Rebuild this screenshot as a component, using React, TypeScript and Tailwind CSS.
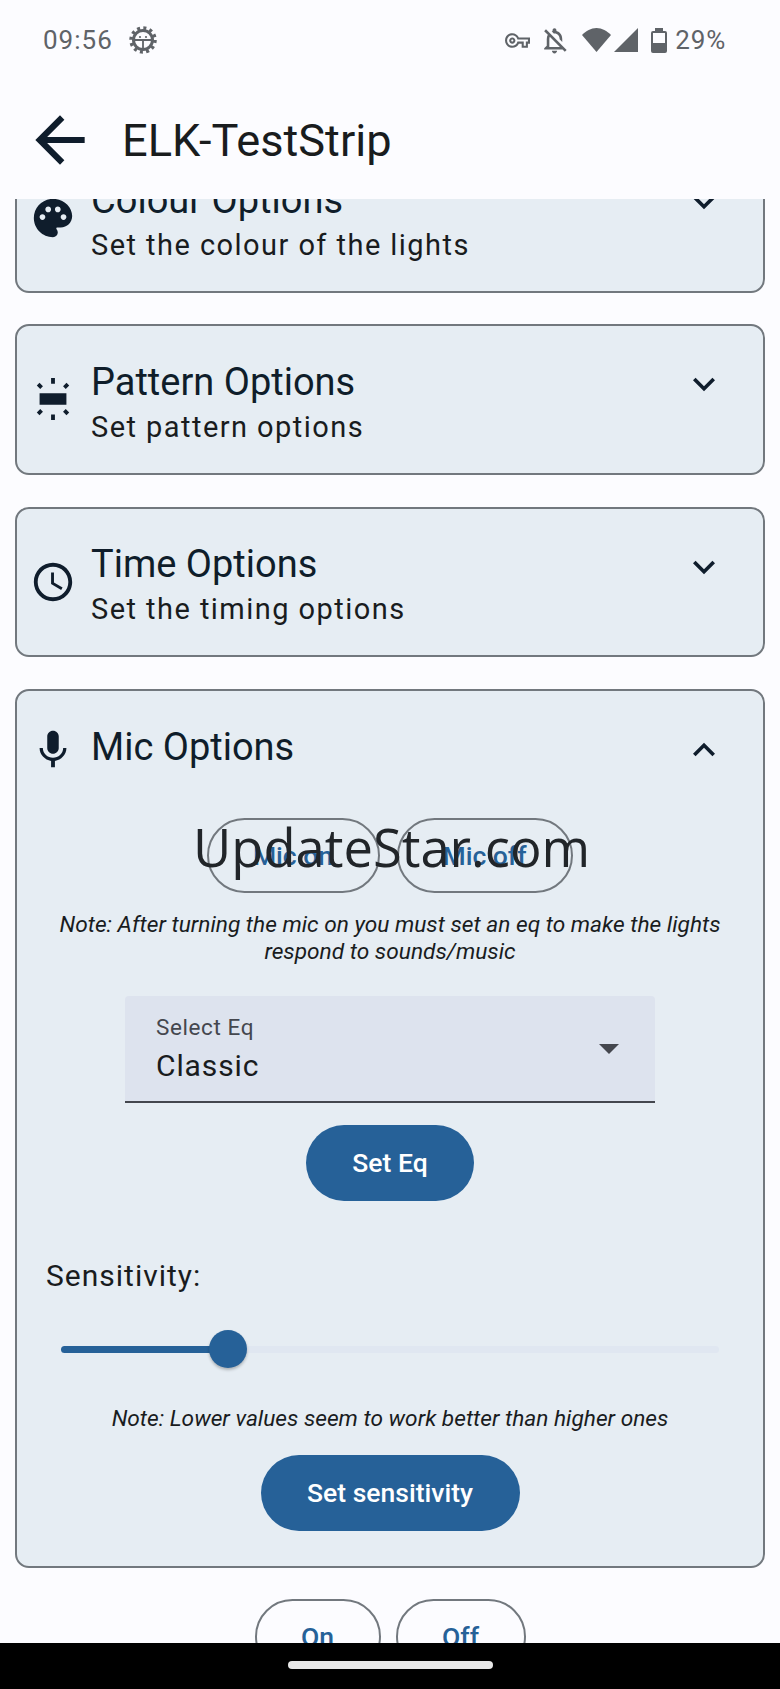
import React from 'react';
import {
  MdArrowBack,
  MdPalette,
  MdWbIridescent,
  MdAccessTime,
  MdMic,
  MdExpandMore,
  MdExpandLess,
  MdOutlineVpnKey,
  MdOutlineNotificationsOff,
} from 'react-icons/md';

const DebugIcon = () => (
  <svg width="28" height="28" viewBox="0 0 28 28" fill="none" stroke="#5f6368">
    <circle cx="14" cy="14" r="9.5" strokeWidth="3" />
    <circle cx="14" cy="14" r="12" strokeWidth="3.5" strokeDasharray="3 3.28" />
    <path d="M6 14h16M14 14v9" strokeWidth="1.8" />
    <circle cx="11" cy="11" r="1.1" fill="#5f6368" stroke="none" />
    <circle cx="17" cy="11" r="1.1" fill="#5f6368" stroke="none" />
  </svg>
);

const StatusBar = () => (
  <div className="h-[80px] flex items-center justify-between pl-[43px] pr-[54px] text-[#5f6368]">
    <div className="flex items-center gap-[16px]">
      <span className="text-[26px] tracking-[1px]">09:56</span>
      <DebugIcon />
    </div>
    <div className="flex items-center">
      <MdOutlineVpnKey size={25} className="mr-[9px]" />
      <MdOutlineNotificationsOff size={31} className="mr-[12px]" />
      <svg width="29" height="24" viewBox="0 0 29 24" fill="#5f6368" className="mr-[3px]">
        <path d="M14.5 24 0 7C4 3 9 0 14.5 0S25 3 29 7Z" />
      </svg>
      <svg width="24" height="24" viewBox="0 0 24 24" fill="#5f6368" className="mr-[13px]">
        <path d="M24 0v24H0Z" />
      </svg>
      <div className="relative w-[16px] h-[22px] mt-[3px] mr-[8px] rounded-[2px] border-2 border-[#5f6368]">
        <div className="absolute -top-[5px] left-[2px] w-[8px] h-[3px] bg-[#5f6368]" />
        <div className="absolute bottom-0 left-0 right-0 h-[8px] bg-[#5f6368]" />
      </div>
      <span className="text-[26px] tracking-[0.8px]">29%</span>
    </div>
  </div>
);

const Header = () => (
  <div className="h-[119px] flex items-center pl-[24px] pt-[1px]">
    <MdArrowBack size={74} className="text-[#0f1d2c] -ml-[1px]" />
    <h1 className="ml-[25px] text-[45.2px] leading-none text-[#191c1e] pt-[2px]">ELK-TestStrip</h1>
  </div>
);

type RowProps = {
  icon: React.ReactNode;
  title: string;
  subtitle: string;
  className: string;
};

const CollapsedCard = ({ icon, title, subtitle, className }: RowProps) => (
  <div className={`rounded-[14px] border-2 border-[#72787e] bg-[#e6edf3] flex items-center pl-[13px] pr-[37px] ${className}`}>
    <div className="w-[46px] shrink-0 text-[#0f1d2c]">{icon}</div>
    <div className="ml-[15px] flex-1 pt-[6px]">
      <div className="text-[38px] leading-[45px] text-[#0f1d2a]">{title}</div>
      <div className="mt-[3px] text-[29px] leading-[38px] tracking-[1.45px] text-[#191c1e]">{subtitle}</div>
    </div>
    <MdExpandMore size={44} className="text-[#0f1d2c] -mt-[31px]" />
  </div>
);

const OutlineButton = ({ label, className }: { label: string; className: string }) => (
  <button className={`rounded-full border-2 border-[#72787e] text-[26.5px] font-medium text-[#266198] flex items-center justify-center ${className}`}>
    {label}
  </button>
);

const FilledButton = ({ label, className }: { label: string; className: string }) => (
  <button className={`h-[76px] rounded-full bg-[#266198] text-white text-[26.5px] font-medium flex items-center justify-center ${className}`}>
    {label}
  </button>
);

const MicCard = () => (
  <div className="mt-[1px] rounded-[14px] border-2 border-[#72787e] bg-[#e6edf3] h-[879px] flex flex-col">
    <div className="h-[113px] flex items-center pl-[13px] pr-[37px] pt-[5px]">
      <MdMic size={46} className="text-[#0f1d2c] shrink-0" />
      <div className="ml-[15px] flex-1 text-[38px] leading-[45px] text-[#0f1d2a] -mt-[6px]">Mic Options</div>
      <MdExpandLess size={44} className="text-[#0f1d2c]" />
    </div>

    <div className="flex justify-center gap-[17px] ml-[-1px] mt-[14px]">
      <OutlineButton label="Mic on" className="w-[173px] h-[75px]" />
      <OutlineButton label="Mic off" className="w-[176px] h-[75px]" />
    </div>

    <p className="mt-[18px] px-[30px] text-center text-[22.7px] leading-[27px] italic text-[#191c1e]">
      Note: After turning the mic on you must set an eq to make the lights respond to sounds/music
    </p>

    <div className="mt-[31px] mx-auto w-[530px] h-[107px] rounded-t-[4px] bg-[#dde3ee] border-b-2 border-[#44474e] pl-[31px] pr-[36px] flex items-center justify-between">
      <div>
        <div className="text-[22.5px] leading-[28px] tracking-[0.6px] text-[#44474e]">Select Eq</div>
        <div className="text-[30px] leading-[38px] tracking-[0.9px] mt-[6px] text-[#191c1e]">Classic</div>
      </div>
      <svg width="20" height="10" viewBox="0 0 20 10" fill="#44474e">
        <path d="M0 0h20L10 10Z" />
      </svg>
    </div>

    <FilledButton label="Set Eq" className="w-[168px] mx-auto mt-[22px]" />

    <div className="mt-[56px] pl-[29px] text-[30px] leading-[38px] tracking-[1px] text-[#191c1e]">Sensitivity:</div>

    <div className="relative mt-[35px] mx-[44px] h-[38px] flex items-center">
      <div className="w-full h-[7px] rounded-full bg-[#e0e7f1]" />
      <div className="absolute left-0 w-[155px] h-[7px] rounded-full bg-[#266198]" />
      <div className="absolute left-[148px] w-[38px] h-[38px] rounded-full bg-[#266198] shadow-[0_2px_3px_rgba(0,0,0,0.25)]" />
    </div>

    <p className="mt-[37px] text-center text-[22.7px] leading-[27px] italic text-[#191c1e]">
      Note: Lower values seem to work better than higher ones
    </p>

    <FilledButton label="Set sensitivity" className="w-[259px] mx-auto mt-[23px]" />
  </div>
);

export default function App() {
  return (
    <div className="relative w-[780px] h-[1689px] overflow-hidden bg-[#fcfcff] flex flex-col font-['Roboto',sans-serif]">
      <StatusBar />
      <Header />

      <main className="flex-1 overflow-hidden">
        <div className="-mt-[57px] px-[15px] flex flex-col gap-[31px]">
          <CollapsedCard className="h-[151px]" icon={<MdPalette size={46} />} title="Colour Options" subtitle="Set the colour of the lights" />
          <CollapsedCard className="h-[151px]" icon={<MdWbIridescent size={46} />} title="Pattern Options" subtitle="Set pattern options" />
          <CollapsedCard className="h-[150px] mt-[1px]" icon={<MdAccessTime size={46} />} title="Time Options" subtitle="Set the timing options" />
          <MicCard />
          <div className="flex justify-center gap-[15px]">
            <OutlineButton label="On" className="w-[126px] h-[75px]" />
            <OutlineButton label="Off" className="w-[130px] h-[75px]" />
          </div>
        </div>
      </main>

      <div className="h-[46px] bg-black flex justify-center pt-[18px] shrink-0">
        <div className="w-[205px] h-[8px] rounded-full bg-[#e8e8e8]" />
      </div>

      {/* watermark over the page */}
      <div className="absolute left-[193px] top-[809px] text-[52.5px] leading-[76px] text-[#212529] font-['Open_Sans',sans-serif]">
        UpdateStar.com
      </div>
    </div>
  );
}
